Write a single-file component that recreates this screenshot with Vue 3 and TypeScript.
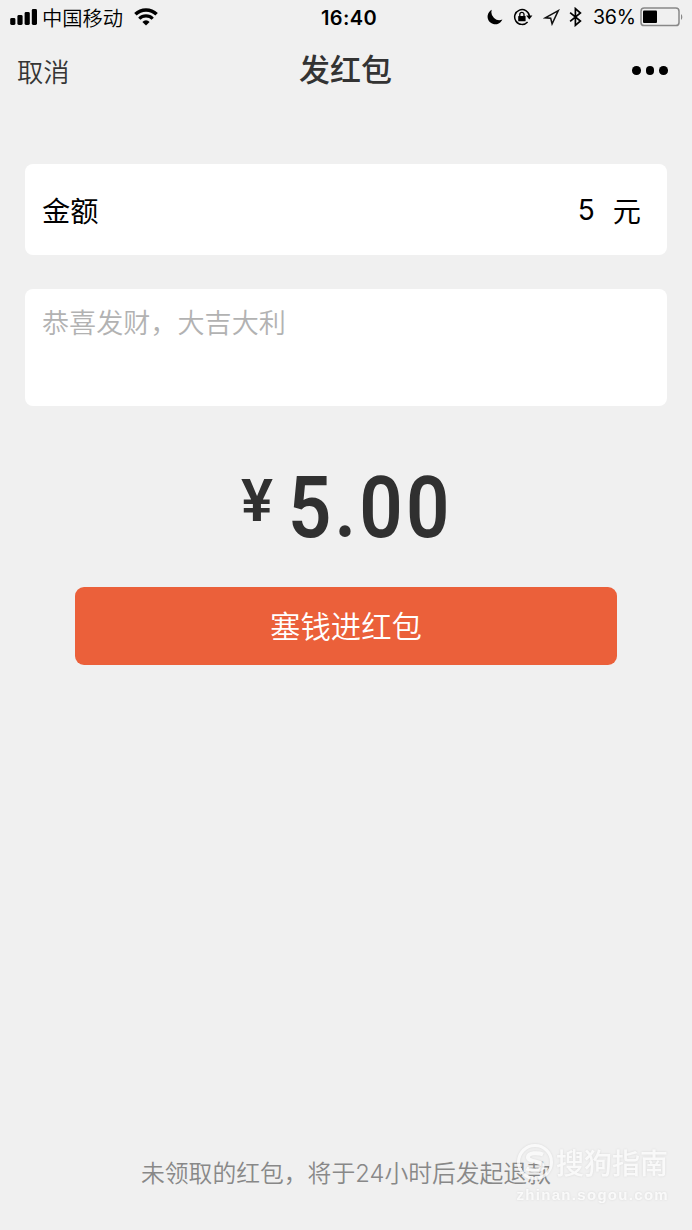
<script setup lang="ts">
import { ref } from 'vue'

const amount = ref<number>(5)
const time = '16:40'
const battery = 36
const signalBars: number[] = [7, 10, 13, 16]
</script>

<template>
  <main class="screen">
    <header class="status">
      <div class="status-left">
        <svg class="signal" width="28" height="18" viewBox="0 0 28 18">
          <rect
            v-for="(h, i) in signalBars"
            :key="i"
            :x="0.2 + i * 7.2"
            :y="17 - h"
            width="5.2"
            :height="h"
            rx="1.4"
          />
        </svg>
        <span class="carrier">中国移动</span>
        <svg class="wifi" width="24" height="18" viewBox="0 0 24 18">
          <path d="M1.4 6.3A15 15 0 0 1 22.6 6.3" fill="none" stroke="#000" stroke-width="3.5" />
          <path d="M5.3 10.7A9.3 9.3 0 0 1 18.7 10.7" fill="none" stroke="#000" stroke-width="3.1" />
          <path d="M8.4 13.9A5 5 0 0 1 15.6 13.9L12 17.5Z" />
        </svg>
      </div>
      <time class="time">{{ time }}</time>
      <div class="status-right">
        <svg class="moon" width="16" height="16" viewBox="0 0 16 16">
          <path d="M4.8 0.8A7.7 7.7 0 1 0 15.4 10.6A8 8 0 0 1 4.8 0.8Z" />
        </svg>
        <svg class="lock" width="20" height="18" viewBox="0 0 20 18">
          <path d="M14.6 13.9A7.4 7.4 0 1 1 16.4 8" fill="none" stroke="#000" stroke-width="1.5" />
          <path d="M13.2 7.6H19.4L16.3 11.6Z" />
          <rect x="5.2" y="7.9" width="7.4" height="5.4" rx=".6" />
          <path d="M6.8 8.5V6.4A2.1 2.1 0 0 1 11 6.4V8.5" fill="none" stroke="#000" stroke-width="1.3" />
        </svg>
        <svg class="arrow" width="17" height="17" viewBox="0 0 17 17">
          <path d="M15.3 1.6L2.2 8.8L7.7 9.2L9.1 14.9Z" fill="none" stroke="#111" stroke-width="1.5" stroke-linejoin="miter" />
        </svg>
        <svg class="bluetooth" width="13" height="20" viewBox="0 0 13 20">
          <path d="M1.1 5.6L11.4 14L6.4 18.3V1.6L11.4 6L1.1 14.4" fill="none" stroke="#000" stroke-width="1.7" />
        </svg>
        <span class="percent">{{ battery }}%</span>
        <svg class="battery" width="44" height="20" viewBox="0 0 44 20">
          <rect x="1" y="1" width="38" height="17.6" rx="3.2" fill="none" stroke="#888" stroke-width="1.5" />
          <rect x="3" y="3.6" width="14" height="12.4" rx="1" />
          <path d="M41 7A4 4 0 0 1 41 13Z" fill="#888" />
        </svg>
      </div>
    </header>

    <nav class="nav">
      <button class="cancel" type="button">取消</button>
      <h1 class="title">发红包</h1>
      <button class="more" type="button" aria-label="更多">
        <i class="dot"></i><i class="dot"></i><i class="dot"></i>
      </button>
    </nav>

    <section class="card amount-card">
      <span class="label">金额</span>
      <span class="value">{{ amount }}</span>
      <span class="unit">元</span>
    </section>

    <section class="card message-card">恭喜发财，大吉大利</section>

    <div class="total">
      <span class="yen">¥</span>
      <span class="sum">{{ amount.toFixed(2) }}</span>
    </div>

    <button class="submit" type="button">塞钱进红包</button>

    <footer class="footer">
      <p class="note">未领取的红包，将于24小时后发起退款</p>
      <div class="watermark">
        <div class="brand">
          <svg class="brand-mark" width="38" height="38" viewBox="0 0 38 38">
            <circle cx="19" cy="19" r="16.5" fill="none" stroke="currentColor" stroke-width="3" />
            <path d="M27 11.5C22 9.5 12 9.5 12 14.3C12 19.5 26.5 17.5 26.5 23.2C26.5 28.5 16 28.2 10.5 25.5" fill="none" stroke="currentColor" stroke-width="4" />
          </svg>
          <span class="brand-name">搜狗指南</span>
        </div>
        <span class="brand-url">zhinan.sogou.com</span>
      </div>
    </footer>
  </main>
</template>

<style>
body {
  margin: 0;
  background: #f0f0f0;
}
</style>

<style scoped>
.screen {
  box-sizing: border-box;
  width: 692px;
  height: 1230px;
  display: flex;
  flex-direction: column;
  overflow: hidden;
  background: #f0f0f0;
  color: #000;
  font-family: "Liberation Sans", "Noto Sans CJK SC", sans-serif;
}
svg {
  display: block;
  flex: none;
}
button {
  border: 0;
  padding: 0;
  background: none;
  font-family: inherit;
}
.status {
  display: grid;
  grid-template-columns: 1fr 80px 1fr;
  height: 36px;
  padding: 0 8px 0 10px;
}
.status-left,
.status-right {
  display: flex;
  align-items: center;
  height: 34px;
  white-space: nowrap;
}
.status-right {
  justify-content: flex-end;
}
.signal {
  margin-top: -1px;
}
.carrier {
  margin-left: 4px;
  font: 350 20.3px/34px "Noto Sans CJK SC", sans-serif;
}
.wifi {
  margin: -1px 0 0 11px;
}
.time {
  padding-left: 4px;
  text-align: center;
  font: 600 20px/36px Inter, sans-serif;
  letter-spacing: 0.35px;
}
.moon {
  margin-right: 10px;
}
.lock {
  margin-right: 10px;
}
.arrow {
  margin-right: 9px;
}
.bluetooth {
  margin-right: 11px;
}
.percent {
  width: 42px;
  font: 400 19.6px/36px Inter, sans-serif;
  letter-spacing: -0.3px;
}
.battery {
  margin: 0 0 0 5px;
}
.nav {
  display: grid;
  grid-template-columns: 1fr auto 1fr;
  align-items: center;
  height: 68px;
  padding: 0 24px 0 17px;
}
.cancel {
  justify-self: start;
  color: #353535;
  font: 350 26.3px/67px "Noto Sans CJK SC", sans-serif;
}
.title {
  margin: 0 -3px 5px 3px;
  color: #333;
  font: 500 31px/63px "Noto Sans CJK SC", sans-serif;
}
.more {
  display: flex;
  justify-self: end;
  gap: 5px;
  margin-top: 1px;
}
.dot {
  width: 8.6px;
  height: 8.6px;
  border-radius: 50%;
  background: #000;
}
.card {
  box-sizing: border-box;
  margin: 0 25px;
  border-radius: 8px;
  background: #fff;
}
.amount-card {
  display: flex;
  align-items: center;
  height: 91px;
  margin-top: 60px;
  padding: 0 26px 0 17px;
  font: 400 28.2px/91px "Noto Sans CJK SC", sans-serif;
}
.value {
  margin-left: auto;
  padding-top: 2px;
  font-family: Inter, sans-serif;
  font-size: 28px;
}
.unit {
  margin-left: 18px;
}
.message-card {
  height: 117px;
  margin-top: 34px;
  padding: 13px 17px;
  color: #b2b2b2;
  font: 350 27.1px/40px "Noto Sans CJK SC", sans-serif;
}
.total {
  display: flex;
  justify-content: center;
  height: 180px;
  color: #303030;
  font-family: Roboto, sans-serif;
}
.yen {
  font-size: 60px;
  font-weight: 600;
  line-height: 190px;
}
.sum {
  width: 163px;
  margin-left: 15px;
  font-size: 86px;
  font-weight: 600;
  line-height: 204px;
  letter-spacing: 3.5px;
  white-space: nowrap;
  transform: scaleX(0.885);
  transform-origin: left center;
}
.submit {
  height: 78px;
  margin: 1px 75px 0;
  border-radius: 9px;
  background: #eb603a;
  color: #fff;
  font: 350 30.4px/76px "Noto Sans CJK SC", sans-serif;
  padding-bottom: 4px;
}
.footer {
  position: relative;
  margin-top: auto;
  height: 90px;
}
.note {
  margin: 0;
  padding-top: 14px;
  text-align: center;
  color: #888;
  font: 350 23.8px/40px Inter, "Noto Sans CJK SC", sans-serif;
}
.watermark {
  position: absolute;
  right: 24px;
  top: 2px;
  display: flex;
  flex-direction: column;
  align-items: flex-end;
  color: rgba(255, 255, 255, 0.8);
  filter: drop-shadow(0 0 1px rgba(0, 0, 0, 0.12));
}
.brand {
  display: flex;
  align-items: center;
  height: 40px;
}
.brand-name {
  margin-left: 2px;
  font: 500 28px/40px "Noto Sans CJK SC", sans-serif;
}
.brand-url {
  padding-top: 1px;
  font: 700 15px/24px "Liberation Sans", sans-serif;
  letter-spacing: 1.3px;
  margin-right: -1px;
}
</style>
